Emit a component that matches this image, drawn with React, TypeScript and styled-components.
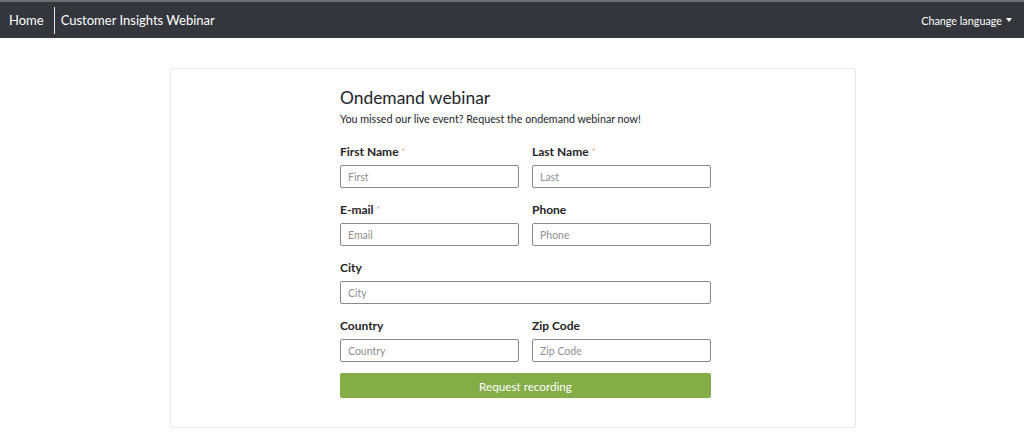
import React from "react";
import styled, { createGlobalStyle } from "styled-components";

const GlobalStyle = createGlobalStyle`
  html, body {
    margin: 0;
    padding: 0;
    background: #ffffff;
    font-family: Lato, "Open Sans", sans-serif;
    color: #212529;
  }
  * {
    box-sizing: border-box;
  }
`;

const Navbar = styled.nav`
  display: flex;
  align-items: center;
  justify-content: space-between;
  height: 38px;
  background: #33373d;
  border-top: 2px solid #6c6d70;
  padding: 0 12px 0 9px;
`;

const Brand = styled.div`
  display: flex;
  align-items: center;
  color: #ffffff;
  font-size: 13px;
`;

const NavLink = styled.a`
  color: #ffffff;
  text-decoration: none;
`;

const Divider = styled.span`
  width: 1px;
  height: 27px;
  background: #e8e8e8;
  margin: 0 6px 0 10px;
`;

const LanguageToggle = styled.button`
  display: flex;
  align-items: center;
  gap: 4px;
  background: none;
  border: 0;
  padding: 0;
  color: #ffffff;
  font-family: inherit;
  font-size: 10.8px;

  &::after {
    content: "";
    border-top: 4px solid #ffffff;
    border-left: 3px solid transparent;
    border-right: 3px solid transparent;
  }
`;

const Page = styled.main`
  padding: 30px 0 0 170px;
`;

const Card = styled.section`
  width: 686px;
  height: 360px;
  border: 1px solid #e6e6e6;
  border-radius: 3px;
  padding: 17px 0 0 169px;
`;

const Form = styled.form`
  width: 371px;
`;

const Title = styled.h2`
  margin: 0;
  font-size: 17.4px;
  font-weight: 400;
  line-height: 24px;
  color: #212529;
`;

const Lead = styled.p`
  margin: 1px 0 17px;
  font-size: 10.7px;
  line-height: 16px;
`;

const Grid = styled.div`
  display: grid;
  grid-template-columns: 1fr 1fr;
  column-gap: 13px;
  row-gap: 14px;
`;

const Field = styled.div<{ $wide?: boolean }>`
  display: flex;
  flex-direction: column;
  grid-column: ${({ $wide }) => ($wide ? "1 / -1" : "auto")};
`;

const Label = styled.label`
  font-size: 12px;
  font-weight: 700;
  line-height: 16px;
  margin-bottom: 5px;
  color: #1f2326;
`;

const Required = styled.span`
  color: #e0a07a;
  font-weight: 400;
  margin-left: 3px;
  font-size: 9px;
  vertical-align: top;
`;

const Input = styled.input`
  height: 23px;
  border: 1px solid #8a8a8a;
  border-radius: 2px;
  padding: 0 7px;
  font-family: inherit;
  font-size: 10.5px;
  color: #495057;

  &::placeholder {
    color: #8f8f8f;
  }
`;

const Submit = styled.button`
  width: 100%;
  height: 25px;
  margin-top: 11px;
  border: 0;
  border-radius: 2px;
  background: #84ad47;
  color: #ffffff;
  font-family: inherit;
  font-size: 11.7px;
`;

type FieldSpec = {
  label: string;
  placeholder: string;
  required?: boolean;
  wide?: boolean;
};

const fields: FieldSpec[] = [
  { label: "First Name", placeholder: "First", required: true },
  { label: "Last Name", placeholder: "Last", required: true },
  { label: "E-mail", placeholder: "Email", required: true },
  { label: "Phone", placeholder: "Phone" },
  { label: "City", placeholder: "City", wide: true },
  { label: "Country", placeholder: "Country" },
  { label: "Zip Code", placeholder: "Zip Code" },
];

export default function App() {
  return (
    <>
      <GlobalStyle />
      <Navbar>
        <Brand>
          <NavLink href="#">Home</NavLink>
          <Divider />
          <NavLink href="#">Customer Insights Webinar</NavLink>
        </Brand>
        <LanguageToggle type="button">Change language</LanguageToggle>
      </Navbar>
      <Page>
        <Card>
          <Form onSubmit={(e) => e.preventDefault()}>
            <Title>Ondemand webinar</Title>
            <Lead>You missed our live event? Request the ondemand webinar now!</Lead>
            <Grid>
              {fields.map((f) => (
                <Field key={f.label} $wide={f.wide}>
                  <Label>
                    {f.label}
                    {f.required && <Required>*</Required>}
                  </Label>
                  <Input placeholder={f.placeholder} />
                </Field>
              ))}
            </Grid>
            <Submit type="submit">Request recording</Submit>
          </Form>
        </Card>
      </Page>
    </>
  );
}
